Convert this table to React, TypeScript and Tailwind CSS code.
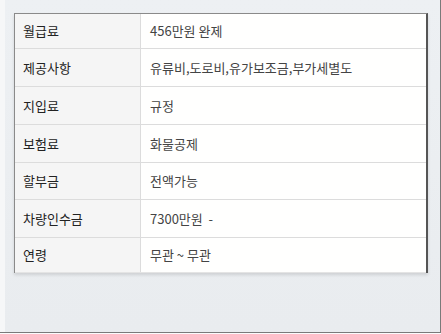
const rows = [
  { label: "월급료", value: "456만원 완제", h: "h-[35px]" },
  { label: "제공사항", value: "유류비,도로비,유가보조금,부가세별도", h: "h-[38px]" },
  { label: "지입료", value: "규정", h: "h-[38px]" },
  { label: "보험료", value: "화물공제", h: "h-[38px]" },
  { label: "할부금", value: "전액가능", h: "h-[37px]" },
  { label: "차량인수금", value: "7300만원  -", h: "h-[38px]" },
  { label: "연령", value: "무관 ~ 무관", h: "h-[35px]" },
];

export default function App() {
  return (
    <div
      className="w-[441px] h-[334px] bg-[#fbfbfc]"
      style={{ fontFamily: '"Noto Sans CJK KR", "Noto Sans", sans-serif' }}
    >
      <div className="flex w-[441px] h-[333px] border-r border-b border-[#7a7a7a]">
        <div className="w-[5px] bg-[#f6f7f8]" />
        <div className="flex-1 bg-gradient-to-b from-[#edf0f3] to-[#e9ecef] pl-[9px] pt-[13px]">
          {/* detail table */}
          <div className="w-[414px] border-t border-l border-[#8a8a8a] border-r-2 border-r-[#555] shadow-[0_2px_3px_rgba(0,0,0,0.12)]">
            {rows.map((r) => (
              <div
                key={r.label}
                className={`flex ${r.h} border-b border-[#dcdcdc] last:border-b-[#e4e4e4]`}
              >
                <div className="w-[126px] bg-[#f5f5f5] border-r border-[#dcdcdc] flex items-center pl-[8px] text-[13px] text-[#222]">
                  {r.label}
                </div>
                <div className="flex-1 bg-[#fffffe] flex items-center pl-[9px] text-[13px] text-[#444] whitespace-pre">
                  {r.value}
                </div>
              </div>
            ))}
          </div>
        </div>
      </div>
    </div>
  );
}
